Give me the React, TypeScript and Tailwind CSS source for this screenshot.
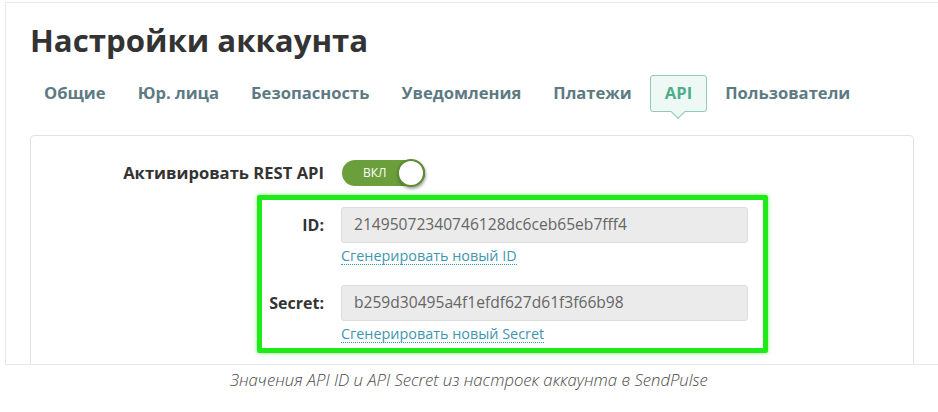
import React from 'react';

const tabs = ['Общие', 'Юр. лица', 'Безопасность', 'Уведомления', 'Платежи', 'API', 'Пользователи'];

const Field: React.FC<{ label: string; value: string; link: string }> = ({ label, value, link }) => (
  <div>
    <div className="flex items-center">
      <div className="w-[62px] text-right text-[16px] font-bold text-[#333]">{label}</div>
      <div className="ml-[17px] w-[407px] h-[36px] flex items-center px-[12px] bg-[#ebebeb] border border-[#dcdcdc] rounded-[3px] text-[15.6px] text-[#666]">
        {value}
      </div>
    </div>
    <div className="ml-[79px] mt-[2px] h-[22px] flex items-center">
      <span className="text-[14.4px] text-[#3f95b0] border-b border-dotted border-[#3f95b0] leading-[17px]">{link}</span>
    </div>
  </div>
);

const App: React.FC = () => {
  return (
    <div className="w-[938px] h-[412px] bg-white overflow-hidden font-['Open_Sans',sans-serif]">
      <div className="ml-[5px] mt-[2px] w-[960px] h-[363px] border border-[#e8e8e8] overflow-hidden">
        <div className="pl-[24px]">
          <h1 className="mt-[15px] text-[31.2px] leading-[44px] font-bold text-[#333]">Настройки аккаунта</h1>

          <div className="mt-[13px] flex items-start ml-[-2px]">
            {tabs.map(t => (
              t === 'API' ? (
                <div key={t} className="relative mx-[2px] px-[14px] h-[37px] flex items-center border border-[#8fcab7] bg-[#eef8f4] rounded-[3px] text-[16.6px] font-bold text-[#4eae8c]">
                  {t}
                  <div className="absolute left-1/2 -translate-x-1/2 top-[31px] w-[10px] h-[10px] rotate-45 bg-[#eef8f4] border-r border-b border-[#8fcab7]" />
                </div>
              ) : (
                <div key={t} className="px-[16px] h-[37px] flex items-center text-[16.6px] font-bold text-[#5d7a84]">{t}</div>
              )
            ))}
          </div>

          <div className="mt-[23px] w-[884px] h-[300px] border border-[#e3e3e3] rounded-t-[4px]">
            <div className="mt-[24px] flex items-center">
              <div className="w-[293px] text-right text-[16.6px] font-bold text-[#333]">Активировать REST API</div>
              <div className="ml-[18px] relative w-[83px] h-[26px] rounded-full bg-[#6a9f3c] flex items-center">
                <span className="ml-[21px] text-[12px] text-white">ВКЛ</span>
                <div className="absolute right-[0px] top-[-1px] w-[28px] h-[28px] rounded-full bg-white border-[2px] border-[#5d8c33] shadow-[1px_2px_3px_rgba(0,0,0,0.35)]" />
              </div>
            </div>

            <div className="ml-[226px] mt-[9px] w-[511px] h-[158px] border-[5px] border-[#1fea18] rounded-[2px] shadow-[0_0_4px_rgba(40,230,30,0.6)] pt-[7px]">
              <Field label="ID:" value="21495072340746128dc6ceb65eb7fff4" link="Сгенерировать новый ID" />
              <div className="mt-[18px]">
                <Field label="Secret:" value="b259d30495a4f1efdf627d61f3f66b98" link="Сгенерировать новый Secret" />
              </div>
            </div>
          </div>
        </div>
      </div>
      <p className="mt-[2px] text-center italic font-light text-[16.7px] text-[#4a4a4a]">
        Значения API ID и API Secret из настроек аккаунта в SendPulse
      </p>
    </div>
  );
};

export default App;
